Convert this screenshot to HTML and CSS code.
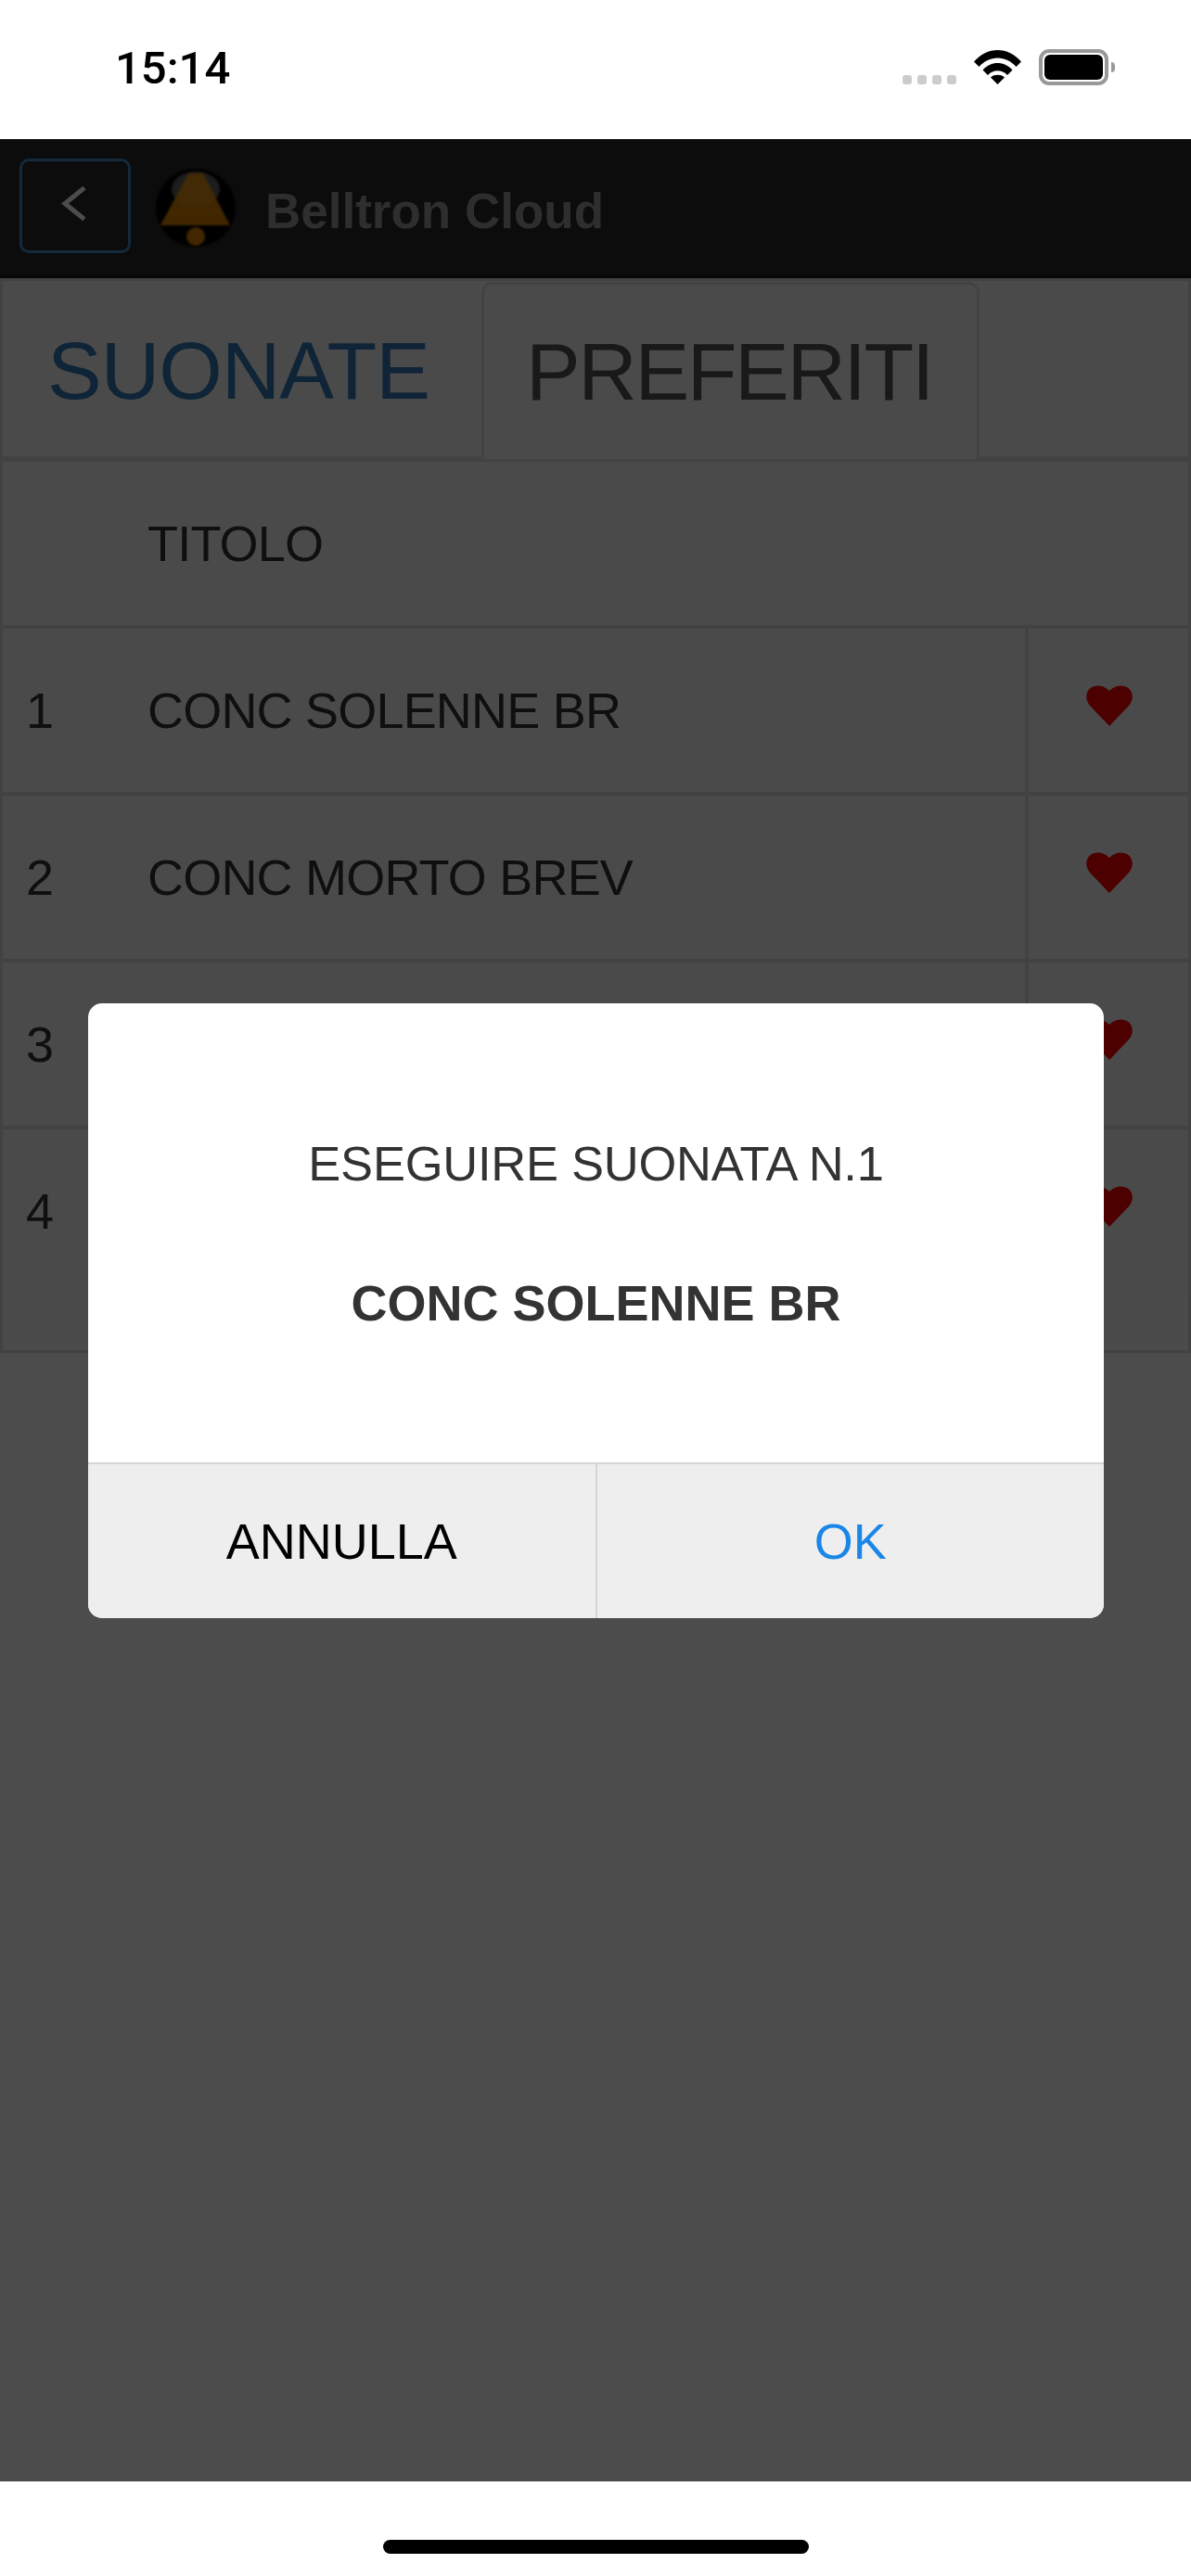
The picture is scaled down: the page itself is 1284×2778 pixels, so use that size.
FILE: index.html
```html
<!DOCTYPE html>
<html lang="it">
<head>
<meta charset="utf-8">
<title>Belltron Cloud</title>
<link rel="stylesheet" href="styles.css">
</head>
<body>
<div class="screen">
  <header class="status">
    <span class="clock">15:14</span>
    <div class="status-icons">
      <div class="signal"><i></i><i></i><i></i><i></i></div>
      <svg class="wifi" width="51" height="37" viewBox="0 0 51 37"><path d="M0 12.500C7 4.500 16 0 25.500 0S44 4.500 51 12.500L45.500 18C40 12 33 8.500 25.500 8.500S11 12 5.500 18Z"/><path d="M9.500 21.500C14 16.500 19.500 14 25.500 14S37 16.500 41.500 21.500L36 27C33 23.800 29.500 22.300 25.500 22.300S18 23.800 15 27Z"/><path d="M25.500 37L18 29.500C20 27.500 22.500 26.800 25.500 26.800S31 27.500 33 29.500Z"/></svg>
      <div class="battery"><div class="battery-level"></div></div>
      <div class="battery-cap"></div>
    </div>
  </header>
  <nav class="navbar">
    <button class="back" type="button">
      <svg width="27" height="37" viewBox="0 0 27 37"><path d="M25 1.500L4 18.500L25 35.500" fill="none" stroke="#fff" stroke-width="5"/></svg>
    </button>
    <svg class="logo" width="86" height="84" viewBox="0 0 86 84">
      <ellipse cx="43" cy="42" rx="43" ry="42" fill="#000"/>
      <ellipse cx="43" cy="22" rx="26" ry="19" fill="#555"/>
      <path d="M35 5H51L80 61H5Z" fill="#d98300"/>
      <ellipse cx="43" cy="22" rx="26" ry="19" fill="#fff" opacity="0.08"/>
      <circle cx="43" cy="73" r="10" fill="#d98300"/>
    </svg>
    <span class="brand">Belltron Cloud</span>
  </nav>
  <main class="content">
    <div class="tabs">
      <span class="tab">SUONATE</span>
      <span class="tab tab-active">PREFERITI</span>
    </div>
    <div class="table">
      <div class="row row-head"><span class="num"></span><span class="name">TITOLO</span></div>
      <div class="row"><span class="num">1</span><span class="name">CONC SOLENNE BR</span><span class="fav"><svg class="heart" width="50" height="44" viewBox="0 0 50 44"><path d="M25 44L4 22C-1 16 -1 8 4 3.500C9 -1 18 -1 25 6C32 -1 41 -1 46 3.500C51 8 51 16 46 22Z"/></svg></span></div>
      <div class="row"><span class="num">2</span><span class="name">CONC MORTO BREV</span><span class="fav"><svg class="heart" width="50" height="44" viewBox="0 0 50 44"><path d="M25 44L4 22C-1 16 -1 8 4 3.500C9 -1 18 -1 25 6C32 -1 41 -1 46 3.500C51 8 51 16 46 22Z"/></svg></span></div>
      <div class="row"><span class="num">3</span><span class="name"></span><span class="fav"><svg class="heart" width="50" height="44" viewBox="0 0 50 44"><path d="M25 44L4 22C-1 16 -1 8 4 3.500C9 -1 18 -1 25 6C32 -1 41 -1 46 3.500C51 8 51 16 46 22Z"/></svg></span></div>
      <div class="row row-last"><span class="num">4</span><span class="name"></span><span class="fav"><svg class="heart" width="50" height="44" viewBox="0 0 50 44"><path d="M25 44L4 22C-1 16 -1 8 4 3.500C9 -1 18 -1 25 6C32 -1 41 -1 46 3.500C51 8 51 16 46 22Z"/></svg></span></div>
      <div class="table-foot"></div>
    </div>
  </main>
  <footer class="home-area"><div class="home-bar"></div></footer>
  <div class="backdrop"></div>
  <div class="dialog">
    <div class="dialog-body">
      <p class="dialog-line">ESEGUIRE SUONATA N.1</p>
      <p class="dialog-title">CONC SOLENNE BR</p>
    </div>
    <div class="dialog-actions">
      <button class="action" type="button">ANNULLA</button>
      <button class="action action-ok" type="button">OK</button>
    </div>
  </div>
</div>
</body>
</html>
```
FILE: styles.css
```css
* { box-sizing: border-box; }
html, body { margin: 0; padding: 0; }
body { font-family: "Liberation Sans", Arial, sans-serif; background: #fff; }
.screen { position: relative; width: 1284px; height: 2778px; display: flex; flex-direction: column; overflow: hidden; background: #fff; }

.status { position: relative; z-index: 3; height: 150px; flex: none; background: #fff; display: flex; justify-content: space-between; padding: 54px 82px 0 124px; }
.clock { font-family: Roboto, "Liberation Sans", sans-serif; font-size: 49px; font-weight: 500; line-height: 39px; color: #000; }
.status-icons { display: flex; align-items: flex-start; margin-top: -1px; }
.signal { display: flex; gap: 6px; margin-top: 28px; margin-right: 19px; }
.signal i { width: 10px; height: 10px; border-radius: 3px; background: #ccc; }
.wifi { margin-top: 1px; margin-right: 19px; fill: #000; }
.battery { width: 75px; height: 39px; border: 4px solid #999; border-radius: 11px; padding: 2px; }
.battery-level { width: 100%; height: 100%; background: #000; border-radius: 6px; }
.battery-cap { width: 4px; height: 11px; margin: 14px 0 0 3px; background: #999; border-radius: 0 5px 5px 0; }

.navbar { height: 150px; flex: none; background: #282828; border-bottom: 3px solid #1a1a1a; display: flex; align-items: flex-start; padding: 21px 0 0 21px; }
.back { width: 120px; height: 102px; background: none; border: 3px solid #428bca; border-radius: 10px; padding: 27px 0 0 42px; display: flex; align-items: flex-start; }
.back svg { display: block; }
.logo { margin: 11px 0 0 27px; flex: none; filter: blur(1px); }
.brand { font-size: 53px; font-weight: 700; color: #999; line-height: 60px; margin: 27px 0 0 32px; }

.content { flex: 1; background: #fff; color: #333; }
.tabs { height: 198px; background: #f8f8f8; border: 3px solid #ddd; box-shadow: inset 0 -3px 0 #ddd; display: flex; align-items: flex-start; }
.tab { height: 192px; font-size: 88px; line-height: 180px; color: #337ab7; padding: 7px 0 0 48px; width: 516px; letter-spacing: -1px; }
.tab-active { width: 537px; margin-top: 1px; padding-left: 45px; padding-top: 4px; height: 191px; color: #555; background: #f8f8f8; border: 3px solid #ddd; border-bottom: 0; border-radius: 12px 12px 0 0; letter-spacing: -2.400px; }

.table { border: 3px solid #ddd; border-top: 0; font-size: 54px; background: #f8f8f8; }
.row { display: flex; height: 180px; border-bottom: 4px solid #ddd; align-items: stretch; }
.row-last { height: 178px; border-bottom: 0; }
.num { width: 156px; padding-left: 25px; line-height: 176px; flex: none; letter-spacing: -0.800px; }
.name { flex: 1; line-height: 176px; letter-spacing: -0.800px; }
.fav { width: 176px; flex: none; border-left: 4px solid #ddd; display: flex; justify-content: center; padding: 61px 0 0 2px; }
.heart { fill: #f00; display: block; }
.table-foot { height: 60px; background: #fcfcfc; }

.home-area { height: 102px; flex: none; background: #fff; display: flex; justify-content: center; padding-top: 63px; position: relative; z-index: 3; }
.home-bar { width: 459px; height: 15px; background: #000; border-radius: 8px; }

.backdrop { position: absolute; left: 0; right: 0; top: 150px; bottom: 102px; background: rgba(0, 0, 0, 0.7); z-index: 2; }
.dialog { position: absolute; z-index: 4; left: 95px; top: 1082px; width: 1095px; height: 663px; background: #fff; border-radius: 15px; overflow: hidden; display: flex; flex-direction: column; }
.dialog-body { height: 495px; text-align: center; color: #333; font-size: 54px; padding-top: 142px; }
.dialog-line { margin: 0; line-height: 62px; font-size: 52.500px; letter-spacing: -0.250px; }
.dialog-title { margin: 88px 0 0; line-height: 62px; font-weight: 700; }
.dialog-actions { flex: 1; display: flex; background: #eee; border-top: 2px solid #d5d5d5; }
.action { flex: 1; border: 0; background: none; font: inherit; font-size: 54px; color: #000; padding: 0 0 1px; }
.action-ok { color: #1a86e8; border-left: 2px solid #d5d5d5; }
```
